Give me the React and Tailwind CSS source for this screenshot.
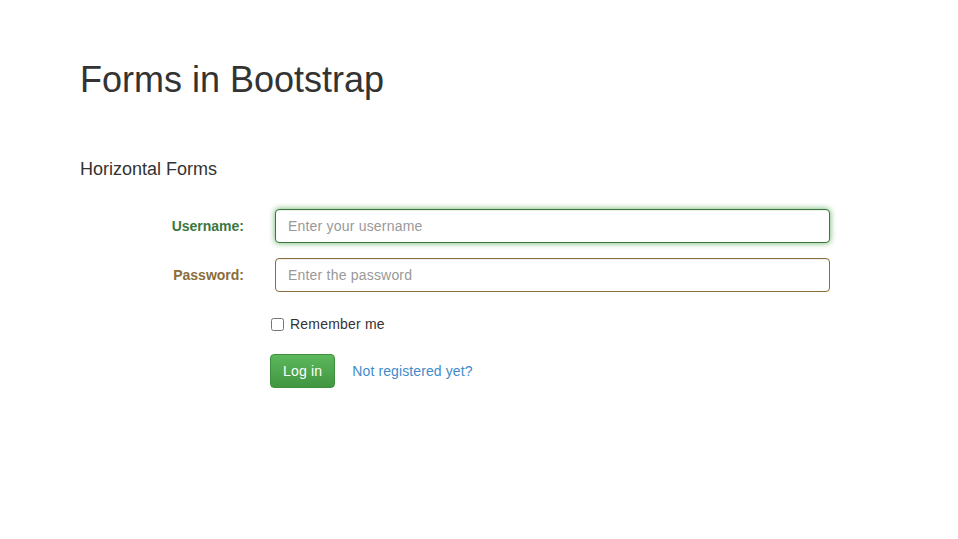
import React, { useState } from 'react'

const App = () => {
  const [remember, setRemember] = useState(false)

  return (
    <div className="min-h-screen bg-white text-[#333333] text-[14px] pl-[80px] pt-[60px]" style={{ fontFamily: '"Liberation Sans", Arial, sans-serif' }}>
      <h1 className="text-[36px] leading-[39.6px] font-normal">Forms in Bootstrap</h1>

      <h4 className="mt-[60px] text-[18px] leading-[19.8px] font-normal">Horizontal Forms</h4>

      <form className="mt-[30px] flex flex-col" onSubmit={(e) => e.preventDefault()}>
        <div className="flex items-center">
          <label htmlFor="username" className="w-[164px] text-right font-bold text-[#3c763d]">Username:</label>
          <input
            id="username"
            type="text"
            placeholder="Enter your username"
            className="ml-[31px] w-[555px] h-[34px] px-3 rounded-[4px] border border-[#3c763d] bg-white text-[14px] tracking-[0.2px] placeholder:text-[#999999] outline-none shadow-[inset_0_1px_1px_rgba(0,0,0,0.075),0_0_6px_#67b168]"
          />
        </div>

        <div className="flex items-center mt-[15px]">
          <label htmlFor="password" className="w-[164px] text-right font-bold text-[#8a6d3b]">Password:</label>
          <input
            id="password"
            type="password"
            placeholder="Enter the password"
            className="ml-[31px] w-[555px] h-[34px] px-3 rounded-[4px] border border-[#8a6d3b] bg-white text-[14px] tracking-[0.2px] placeholder:text-[#999999] outline-none shadow-[inset_0_1px_1px_rgba(0,0,0,0.075)]"
          />
        </div>

        <label className="flex items-center ml-[191px] mt-[22px] h-[20px] cursor-pointer">
          <input
            type="checkbox"
            checked={remember}
            onChange={() => setRemember(!remember)}
            className="w-[13px] h-[13px] m-0"
          />
          <span className="ml-[6px] tracking-[0.2px]">Remember me</span>
        </label>

        <div className="flex items-center ml-[190px] mt-[20px]">
          <button
            type="submit"
            className="h-[34px] px-[12px] rounded-[4px] border border-[#3e8f3e] bg-gradient-to-b from-[#5cb85c] to-[#419641] text-white text-[14px] tracking-[0.2px]"
          >
            Log in
          </button>
          <a href="#" className="ml-[17px] text-[#428bca] tracking-[0.1px]">Not registered yet?</a>
        </div>
      </form>
    </div>
  )
}

export default App
